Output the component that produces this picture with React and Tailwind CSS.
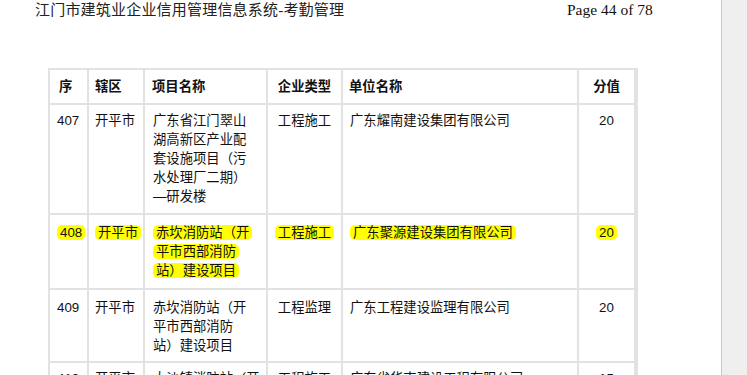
import React from "react";

const body = { fontFamily: '"Liberation Sans","Noto Sans CJK SC",sans-serif' };

function HL({ children }) {
  return (
    <span className="bg-[#ffff00] rounded-[5px] px-[3px] py-0 [box-decoration-break:clone] [-webkit-box-decoration-break:clone]">
      {children}
    </span>
  );
}

const rows = [
  {
    no: "407",
    area: "开平市",
    name: ["广东省江门翠山", "湖高新区产业配", "套设施项目（污", "水处理厂二期）", "—研发楼"],
    type: "工程施工",
    unit: "广东耀南建设集团有限公司",
    score: "20",
    pt: "pt-[6px]",
  },
  {
    no: "408",
    area: "开平市",
    name: ["赤坎消防站（开", "平市西部消防", "站）建设项目"],
    type: "工程施工",
    unit: "广东聚源建设集团有限公司",
    score: "20",
    pt: "pt-[8px]",
    hl: true,
  },
  {
    no: "409",
    area: "开平市",
    name: ["赤坎消防站（开", "平市西部消防", "站）建设项目"],
    type: "工程监理",
    unit: "广东工程建设监理有限公司",
    score: "20",
    pt: "pt-[8px]",
  },
  {
    no: "410",
    area: "开平市",
    name: ["大沙镇消防站（开", "平市西部消防", "站）建设项目"],
    type: "工程施工",
    unit: "广东省华南建设工程有限公司",
    score: "15",
    pt: "pt-[6px]",
  },
];

function Wrap({ hl, children }) {
  return hl ? <HL>{children}</HL> : <>{children}</>;
}

export default function App() {
  return (
    <div className="flex h-[375px] w-[747px] overflow-hidden bg-white">
      <div className="relative flex-1 bg-white">
        <div className="flex items-center h-[20px] pl-[35px] text-[#222]">
          <div
            className="w-[532px] shrink-0 text-[15px] leading-[20px] whitespace-nowrap tracking-[0.2px]"
            style={{ fontFamily: '"Liberation Serif","Noto Sans CJK SC",serif' }}
          >
            江门市建筑业企业信用管理信息系统-考勤管理
          </div>
          <div
            className="text-[15.5px] leading-[20px] whitespace-nowrap text-[#111]"
            style={{ fontFamily: '"Liberation Serif",serif' }}
          >
            Page 44 of 78
          </div>
        </div>

        <div className="pl-[48px] pt-[48px]">
          <div
            className="grid w-[590px] bg-[#e2e2e2] gap-[2px] p-[2px] grid-cols-[37px_54px_121px_73px_234px_55px] grid-rows-[33px_108px_73px_71px_60px] text-[13.33px] leading-[19px] text-[#111]"
            style={body}
          >
            <div className="bg-white flex items-center pl-[9px] font-bold">序</div>
            <div className="bg-white flex items-center pl-[6px] font-bold">辖区</div>
            <div className="bg-white flex items-center pl-[7px] font-bold">项目名称</div>
            <div className="bg-white flex items-center justify-center font-bold">企业类型</div>
            <div className="bg-white flex items-center pl-[6px] font-bold">单位名称</div>
            <div className="bg-white flex items-center justify-center font-bold">分值</div>

            {rows.map((r) => (
              <React.Fragment key={r.no}>
                <div className={`bg-white pl-[7px] ${r.pt} whitespace-nowrap`}>
                  <Wrap hl={r.hl}>{r.no}</Wrap>
                </div>
                <div className={`bg-white pl-[6px] ${r.pt} whitespace-nowrap`}>
                  <Wrap hl={r.hl}>{r.area}</Wrap>
                </div>
                <div className={`bg-white pl-[8px] ${r.pt} whitespace-nowrap`}>
                  <Wrap hl={r.hl}>
                    {r.name.map((l, i) => (
                      <React.Fragment key={i}>
                        {l}
                        {i < r.name.length - 1 && <br />}
                      </React.Fragment>
                    ))}
                  </Wrap>
                </div>
                <div className={`bg-white text-center ${r.pt} whitespace-nowrap`}>
                  <Wrap hl={r.hl}>{r.type}</Wrap>
                </div>
                <div className={`bg-white pl-[7px] ${r.pt} whitespace-nowrap`}>
                  <Wrap hl={r.hl}>{r.unit}</Wrap>
                </div>
                <div className={`bg-white text-center ${r.pt} whitespace-nowrap`}>
                  <Wrap hl={r.hl}>{r.score}</Wrap>
                </div>
              </React.Fragment>
            ))}
          </div>
        </div>
      </div>
      <div className="w-[26px] shrink-0 border-l border-[#c8c8c8] bg-[#efefef]" />
    </div>
  );
}
